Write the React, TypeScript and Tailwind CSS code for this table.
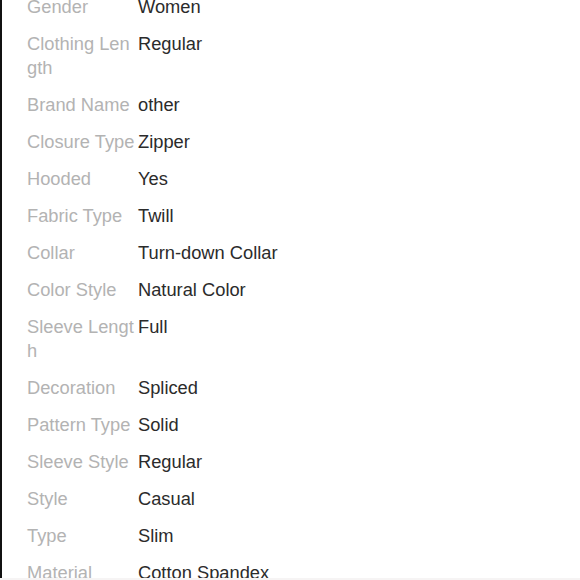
const specs = [
  ["Gender", "Women"],
  ["Clothing Length", "Regular"],
  ["Brand Name", "other"],
  ["Closure Type", "Zipper"],
  ["Hooded", "Yes"],
  ["Fabric Type", "Twill"],
  ["Collar", "Turn-down Collar"],
  ["Color Style", "Natural Color"],
  ["Sleeve Length", "Full"],
  ["Decoration", "Spliced"],
  ["Pattern Type", "Solid"],
  ["Sleeve Style", "Regular"],
  ["Style", "Casual"],
  ["Type", "Slim"],
  ["Material", "Cotton Spandex"],
];

const App = () => {
  return (
    <div className="w-[580px] h-[580px] bg-[#f6f4f4] font-['Liberation_Sans',Arial,sans-serif]">
      <div className="h-[578px] overflow-hidden bg-white border-l-2 border-[#111]">
        {/* Specs list */}
        <div className="-mt-[5px] pl-[25px] flex flex-col gap-[13px] text-[18.3px] leading-[24px]">
          {specs.map(([label, value]) => (
            <div key={label} className="grid grid-cols-[110px_1fr] gap-x-px">
              <span className="text-[#b3b3b3] break-all">{label}</span>
              <span className="text-[#2b2b2b]">{value}</span>
            </div>
          ))}
        </div>
      </div>
    </div>
  );
};

export default App;
